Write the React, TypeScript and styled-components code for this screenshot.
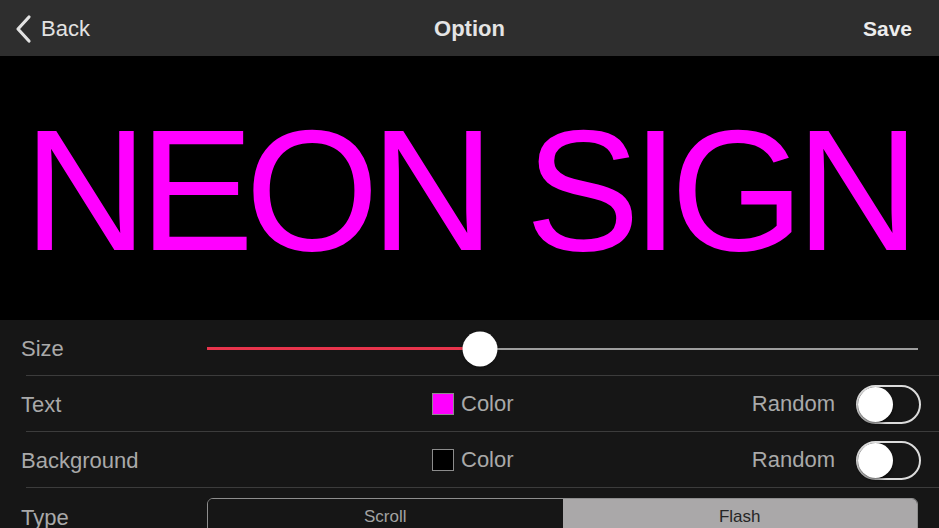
import React from "react";
import styled, { createGlobalStyle } from "styled-components";

const Global = createGlobalStyle`
  html, body { margin: 0; padding: 0; background: #161616; overflow: hidden; }
  body { font-family: "Liberation Sans", Arial, sans-serif; }
  * { box-sizing: border-box; }
`;

const Page = styled.div`
  width: 939px;
  height: 528px;
  display: flex;
  flex-direction: column;
  overflow: hidden;
  background: #161616;
`;

const NavBar = styled.header`
  height: 56px;
  flex: none;
  background: #2e2e2e;
  display: grid;
  grid-template-columns: 1fr auto 1fr;
  align-items: center;
  padding: 0 14px;
  color: #e6e6e6;
  font-size: 22px;
`;

const BackButton = styled.div`
  display: flex;
  align-items: center;
  gap: 5px;
  justify-self: start;
  color: #e2e2e2;
  margin-top: 2px;
`;

const Title = styled.div`
  font-weight: 700;
  font-size: 22px;
  color: #e4e4e4;
  margin-top: 2px;
`;

const SaveButton = styled.div`
  justify-self: end;
  margin-right: 13px;
  margin-top: 2px;
  font-weight: 700;
  font-size: 21px;
  color: #ececec;
`;

const Preview = styled.section`
  height: 264px;
  flex: none;
  background: #000;
  display: flex;
  align-items: center;
  justify-content: center;
  overflow: hidden;
`;

const NeonText = styled.div<{ $color: string }>`
  color: ${(p) => p.$color};
  font-family: "Liberation Sans", Arial, sans-serif;
  font-size: 172px;
  line-height: 1;
  letter-spacing: -8.6px;
  white-space: nowrap;
  margin-top: 3px;
  margin-right: 4px;
`;

const Settings = styled.section`
  flex: 1;
  background: #161616;
  display: flex;
  flex-direction: column;
`;

const Row = styled.div`
  position: relative;
  height: 56px;
  flex: none;
  display: grid;
  grid-template-columns: 186px 1fr;
  align-items: center;
  padding: 0 21px;
  &::after {
    content: "";
    position: absolute;
    left: 26px;
    right: 0;
    bottom: 0;
    height: 1px;
    background: #3c3c3c;
  }
`;

const Label = styled.div`
  color: #a9a9a9;
  font-size: 22px;
  margin-top: 1px;
`;

const SliderTrack = styled.div`
  position: relative;
  height: 2px;
  background: #9e9e9e;
  margin-top: 1px;
`;

const SliderFill = styled.div`
  position: absolute;
  left: 0;
  top: -0.5px;
  bottom: -0.5px;
  background: #e8344c;
`;

const SliderThumb = styled.div`
  position: absolute;
  top: 50%;
  width: 35px;
  height: 35px;
  border-radius: 50%;
  background: #fff;
  transform: translate(-50%, -50%);
  box-shadow: 0 1px 3px rgba(0, 0, 0, 0.4);
`;

const Controls = styled.div`
  display: grid;
  grid-template-columns: 1fr auto auto;
  align-items: center;
  padding-left: 225px;
  margin-right: -3px;
`;

const ColorPick = styled.div`
  display: flex;
  align-items: center;
  gap: 7px;
  color: #a9a9a9;
  font-size: 22px;
`;

const Swatch = styled.div<{ $color: string }>`
  width: 22px;
  height: 22px;
  background: ${(p) => p.$color};
  border: 1px solid #8c8c8c;
`;

const RandomLabel = styled.div`
  margin-right: 21px;
  color: #a9a9a9;
  font-size: 22px;
`;

const Switch = styled.div`
  position: relative;
  width: 65px;
  height: 39px;
  border-radius: 20px;
  border: 2px solid #dcdcdc;
  background: #161616;
`;

const Knob = styled.div`
  position: absolute;
  left: 0;
  top: 0;
  width: 35px;
  height: 35px;
  border-radius: 50%;
  background: #fff;
  box-shadow: 0 2px 3px rgba(0, 0, 0, 0.5);
`;

const TypeRow = styled.div`
  height: 40px;
  flex: none;
  display: grid;
  grid-template-columns: 186px 1fr;
  align-items: start;
  padding: 10px 21px 0;
`;

const TypeLabel = styled(Label)`
  margin-top: 7px;
`;

const Segmented = styled.div`
  display: grid;
  grid-template-columns: 1fr 1fr;
  height: 40px;
  border: 1px solid #8e8e8e;
  border-radius: 6px;
  overflow: hidden;
`;

const Segment = styled.div<{ $active?: boolean }>`
  display: flex;
  justify-content: center;
  padding-top: 8px;
  font-size: 17px;
  background: ${(p) => (p.$active ? "#aaa8a9" : "#161616")};
  color: ${(p) => (p.$active ? "#262626" : "#a3a3a3")};
`;

function Toggle() {
  return (
    <Switch>
      <Knob />
    </Switch>
  );
}

export default function App() {
  const size = 0.384;
  return (
    <Page>
      <Global />
      <NavBar>
        <BackButton>
          <svg width="22" height="30" viewBox="0 0 22 30">
            <path d="M15 3 L4 15 L15 27" fill="none" stroke="#e2e2e2" strokeWidth="3.2" strokeLinecap="round" strokeLinejoin="round" />
          </svg>
          <span>Back</span>
        </BackButton>
        <Title>Option</Title>
        <SaveButton>Save</SaveButton>
      </NavBar>
      <Preview>
        <NeonText $color="#ff00ff">NEON SIGN</NeonText>
      </Preview>
      <Settings>
        <Row>
          <Label>Size</Label>
          <SliderTrack>
            <SliderFill style={{ width: `${size * 100}%` }} />
            <SliderThumb style={{ left: `${size * 100}%` }} />
          </SliderTrack>
        </Row>
        <Row>
          <Label>Text</Label>
          <Controls>
            <ColorPick>
              <Swatch $color="#ff00ff" />
              Color
            </ColorPick>
            <RandomLabel>Random</RandomLabel>
            <Toggle />
          </Controls>
        </Row>
        <Row>
          <Label>Background</Label>
          <Controls>
            <ColorPick>
              <Swatch $color="#000000" />
              Color
            </ColorPick>
            <RandomLabel>Random</RandomLabel>
            <Toggle />
          </Controls>
        </Row>
        <TypeRow>
          <TypeLabel>Type</TypeLabel>
          <Segmented>
            <Segment>Scroll</Segment>
            <Segment $active>Flash</Segment>
          </Segmented>
        </TypeRow>
      </Settings>
    </Page>
  );
}
